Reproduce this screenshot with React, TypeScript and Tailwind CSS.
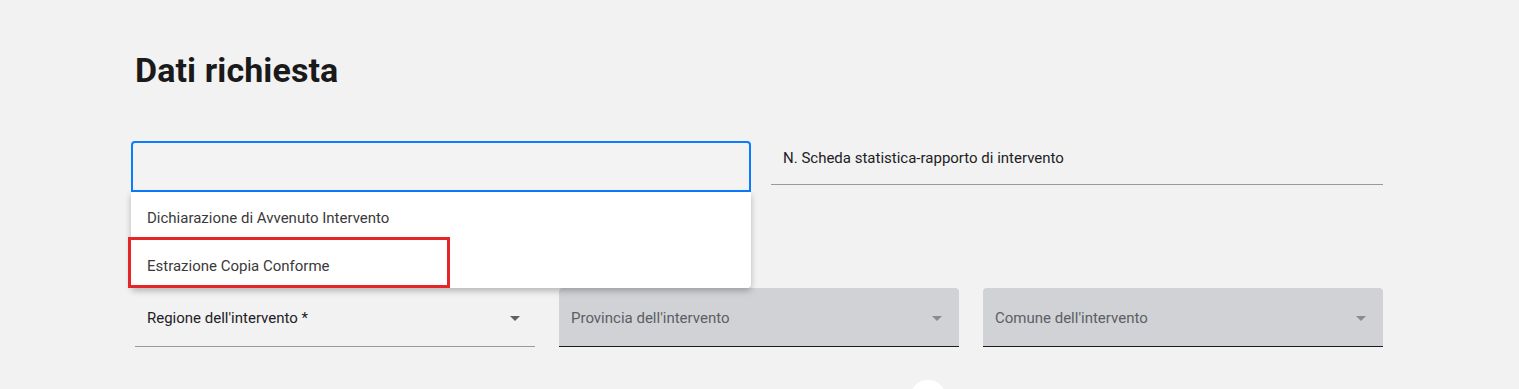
const font = "font-['Roboto',sans-serif]"

function Caret({ muted }: { muted?: boolean }) {
  return (
    <svg width="10" height="5" viewBox="0 0 10 5" className={muted ? 'text-[#8a8c91]' : 'text-[#5f6166]'}>
      <path d="M0 0h10L5 5z" fill="currentColor" />
    </svg>
  )
}

function SelectField({ label, required, disabled }: { label: string; required?: boolean; disabled?: boolean }) {
  return (
    <div
      className={
        disabled
          ? 'flex h-[59px] items-center justify-between rounded-t-[4px] border-b border-[#1c1c1c] bg-[#d1d2d6] pl-3 pr-[17px] pt-[3px]'
          : 'flex h-[59px] items-center justify-between border-b border-[#9a9a9a] pl-3 pr-[15px] pt-[2px]'
      }
    >
      <span className={disabled ? 'text-[15px] text-[#5b5e63]' : 'text-[15px] text-[#1d2125]'}>
        {label}
        {required && <span className="text-[#1d2125]"> *</span>}
      </span>
      <Caret muted={disabled} />
    </div>
  )
}

export default function App() {
  return (
    <div className={`h-screen overflow-hidden bg-[#f2f2f2] ${font}`}>
      <div className="ml-[135px] w-[1248px] pt-[46px]">
        <h1 className="text-[34px] font-bold leading-[48px] tracking-[0.1px] text-[#1a1a1a]">Dati richiesta</h1>

        {/* riga tipo richiesta */}
        <div className="mt-[47px] grid grid-cols-2 gap-6">
          <div className="relative h-[44px]">
            <div className="absolute -left-[4px] top-0 z-10 w-[620px]">
              <div className="h-[51px] rounded-t-[4px] border-2 border-[#0a7cff] bg-[#f3f3f3]" />
              <div className="relative rounded-b-[4px] bg-white shadow-[0_3px_6px_rgba(0,0,0,0.25)]">
                <div className="flex h-12 items-center px-4 pt-[4px] text-[15px] text-[#3a3a3a]">
                  Dichiarazione di Avvenuto Intervento
                </div>
                <div className="flex h-12 items-center px-4 pt-[4px] text-[15px] text-[#3a3a3a]">
                  Estrazione Copia Conforme
                </div>
                <div className="absolute -left-[3px] top-[45px] h-[51px] w-[322px] border-[3px] border-[#e52528]" />
              </div>
            </div>
          </div>
          <div className="h-[44px] border-b border-[#999999] px-3 pt-[7px]">
            <span className="block text-[15px] leading-5 text-[#1d2125]">N. Scheda statistica-rapporto di intervento</span>
          </div>
        </div>

        {/* riga luogo */}
        <div className="mt-[103px] grid grid-cols-3 gap-6">
          <SelectField label="Regione dell'intervento" required />
          <SelectField label="Provincia dell'intervento" disabled />
          <SelectField label="Comune dell'intervento" disabled />
        </div>

        <div className="mt-[33px] pl-[775px]">
          <div className="h-9 w-9 rounded-full bg-white" />
        </div>
      </div>
    </div>
  )
}
